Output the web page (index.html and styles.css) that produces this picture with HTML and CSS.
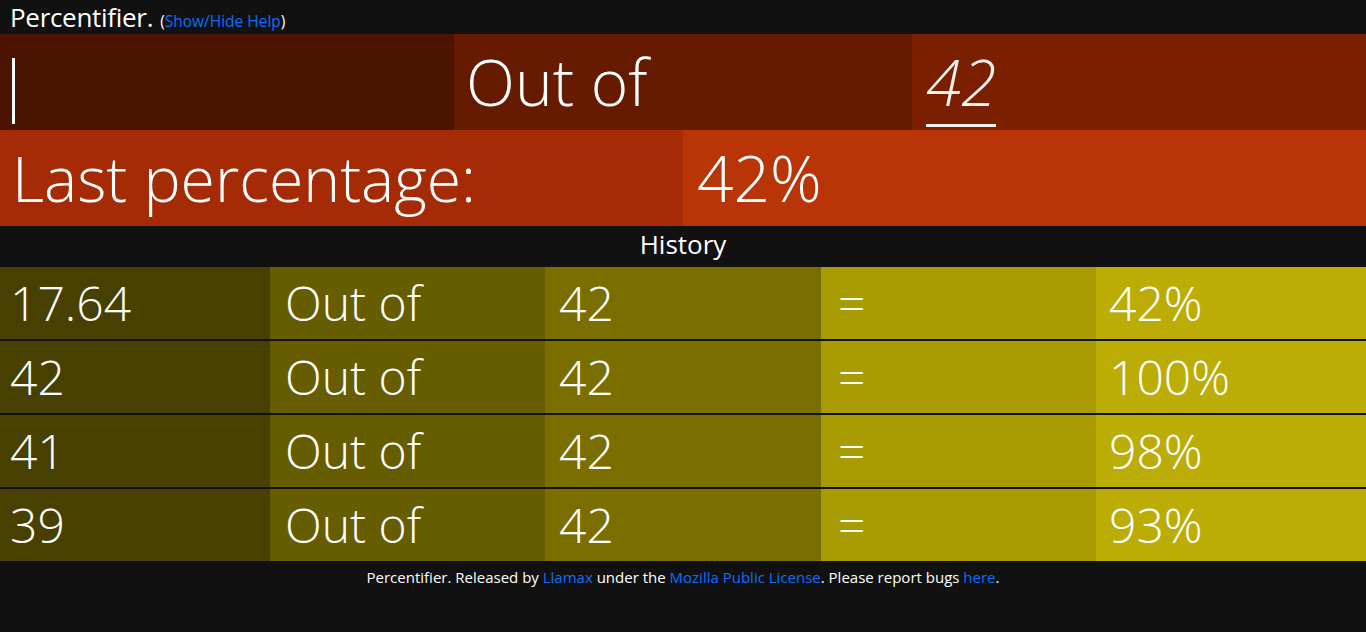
FILE: index.html
```html
<!DOCTYPE html>
<html lang="en">
<head>
<meta charset="utf-8">
<title>Percentifier</title>
<link rel="stylesheet" href="styles.css">
</head>
<body>
<header class="top">
  <span class="brand">Percentifier.</span>
  <span class="help">(<a href="#">Show/Hide Help</a>)</span>
</header>
<section class="calc">
  <div class="cell c1"><span class="caret"></span></div>
  <div class="cell c2">Out of</div>
  <div class="cell c3"><span class="total">42</span></div>
</section>
<section class="result">
  <div class="cell r1">Last percentage:</div>
  <div class="cell r2">42%</div>
</section>
<div class="history-title">History</div>
<section class="history">
  <div class="hrow">
    <div class="hcell h1">17.64</div>
    <div class="hcell h2">Out of</div>
    <div class="hcell h3">42</div>
    <div class="hcell h4">=</div>
    <div class="hcell h5">42%</div>
  </div>
  <div class="hrow">
    <div class="hcell h1">42</div>
    <div class="hcell h2">Out of</div>
    <div class="hcell h3">42</div>
    <div class="hcell h4">=</div>
    <div class="hcell h5">100%</div>
  </div>
  <div class="hrow">
    <div class="hcell h1">41</div>
    <div class="hcell h2">Out of</div>
    <div class="hcell h3">42</div>
    <div class="hcell h4">=</div>
    <div class="hcell h5">98%</div>
  </div>
  <div class="hrow">
    <div class="hcell h1">39</div>
    <div class="hcell h2">Out of</div>
    <div class="hcell h3">42</div>
    <div class="hcell h4">=</div>
    <div class="hcell h5">93%</div>
  </div>
</section>
<footer class="foot">
  Percentifier. Released by <a href="#">Llamax</a> under the <a href="#">Mozilla Public License</a>. Please report bugs <a href="#">here</a>.
</footer>
</body>
</html>
```

FILE: styles.css
```css
html, body {
  margin: 0;
  padding: 0;
  background: #111111;
  color: #ffffff;
  font-family: "Open Sans", "Noto Sans", sans-serif;
}

a {
  color: #0d6efd;
  text-decoration: none;
}

.top {
  height: 34px;
  display: flex;
  align-items: baseline;
  gap: 7px;
  padding: 0 10px;
  box-sizing: border-box;
}

.brand {
  font-size: 26px;
  line-height: 34px;
  font-weight: 400;
  letter-spacing: -0.3px;
}

.help {
  font-size: 15.5px;
}

.calc {
  display: grid;
  grid-template-columns: 454px 458px 1fr;
  height: 96px;
}

.result {
  display: grid;
  grid-template-columns: 683px 1fr;
  height: 96px;
}

.cell {
  display: flex;
  align-items: center;
  padding: 0 12px;
  font-size: 64px;
  font-weight: 300;
  line-height: 1;
}

.c1 { background: #4a1400; }
.c2 { background: #661b00; }
.c3 { background: #7a2000; padding-left: 14px; }
.r1 { background: #a52b07; font-size: 62.5px; }
.r2 { background: #b93407; padding-left: 14px; }

.caret {
  display: block;
  width: 3px;
  height: 66px;
  background: #ffffff;
  margin-top: 18px;
}

.total {
  display: inline-block;
  font-style: italic;
  color: #f2f2f2;
  line-height: 64px;
  border-bottom: 3px solid #f2f2f2;
  padding-bottom: 10px;
  margin-top: 13px;
}

.history-title {
  height: 41px;
  display: flex;
  align-items: center;
  justify-content: center;
  font-size: 26px;
  font-weight: 400;
  padding-bottom: 6px;
  box-sizing: border-box;
}

.history {
  display: flex;
  flex-direction: column;
  gap: 2px;
}

.hrow {
  display: grid;
  grid-template-columns: 270px 275px 276px 275px 1fr;
  height: 72px;
}

.hcell {
  display: flex;
  align-items: center;
  padding: 0 12px;
  font-size: 48px;
  font-weight: 300;
  line-height: 1;
}

.h1 { background: #474000; padding-left: 10px; }
.h2 { background: #665c00; padding-left: 15px; }
.h3 { background: #7a6e00; padding-left: 14px; }
.h4 { background: #a89b04; padding-left: 17px; }
.h5 { background: #bcad06; padding-left: 13px; }

.foot {
  text-align: center;
  font-size: 15px;
  line-height: 20px;
  padding-top: 6px;
}
```
